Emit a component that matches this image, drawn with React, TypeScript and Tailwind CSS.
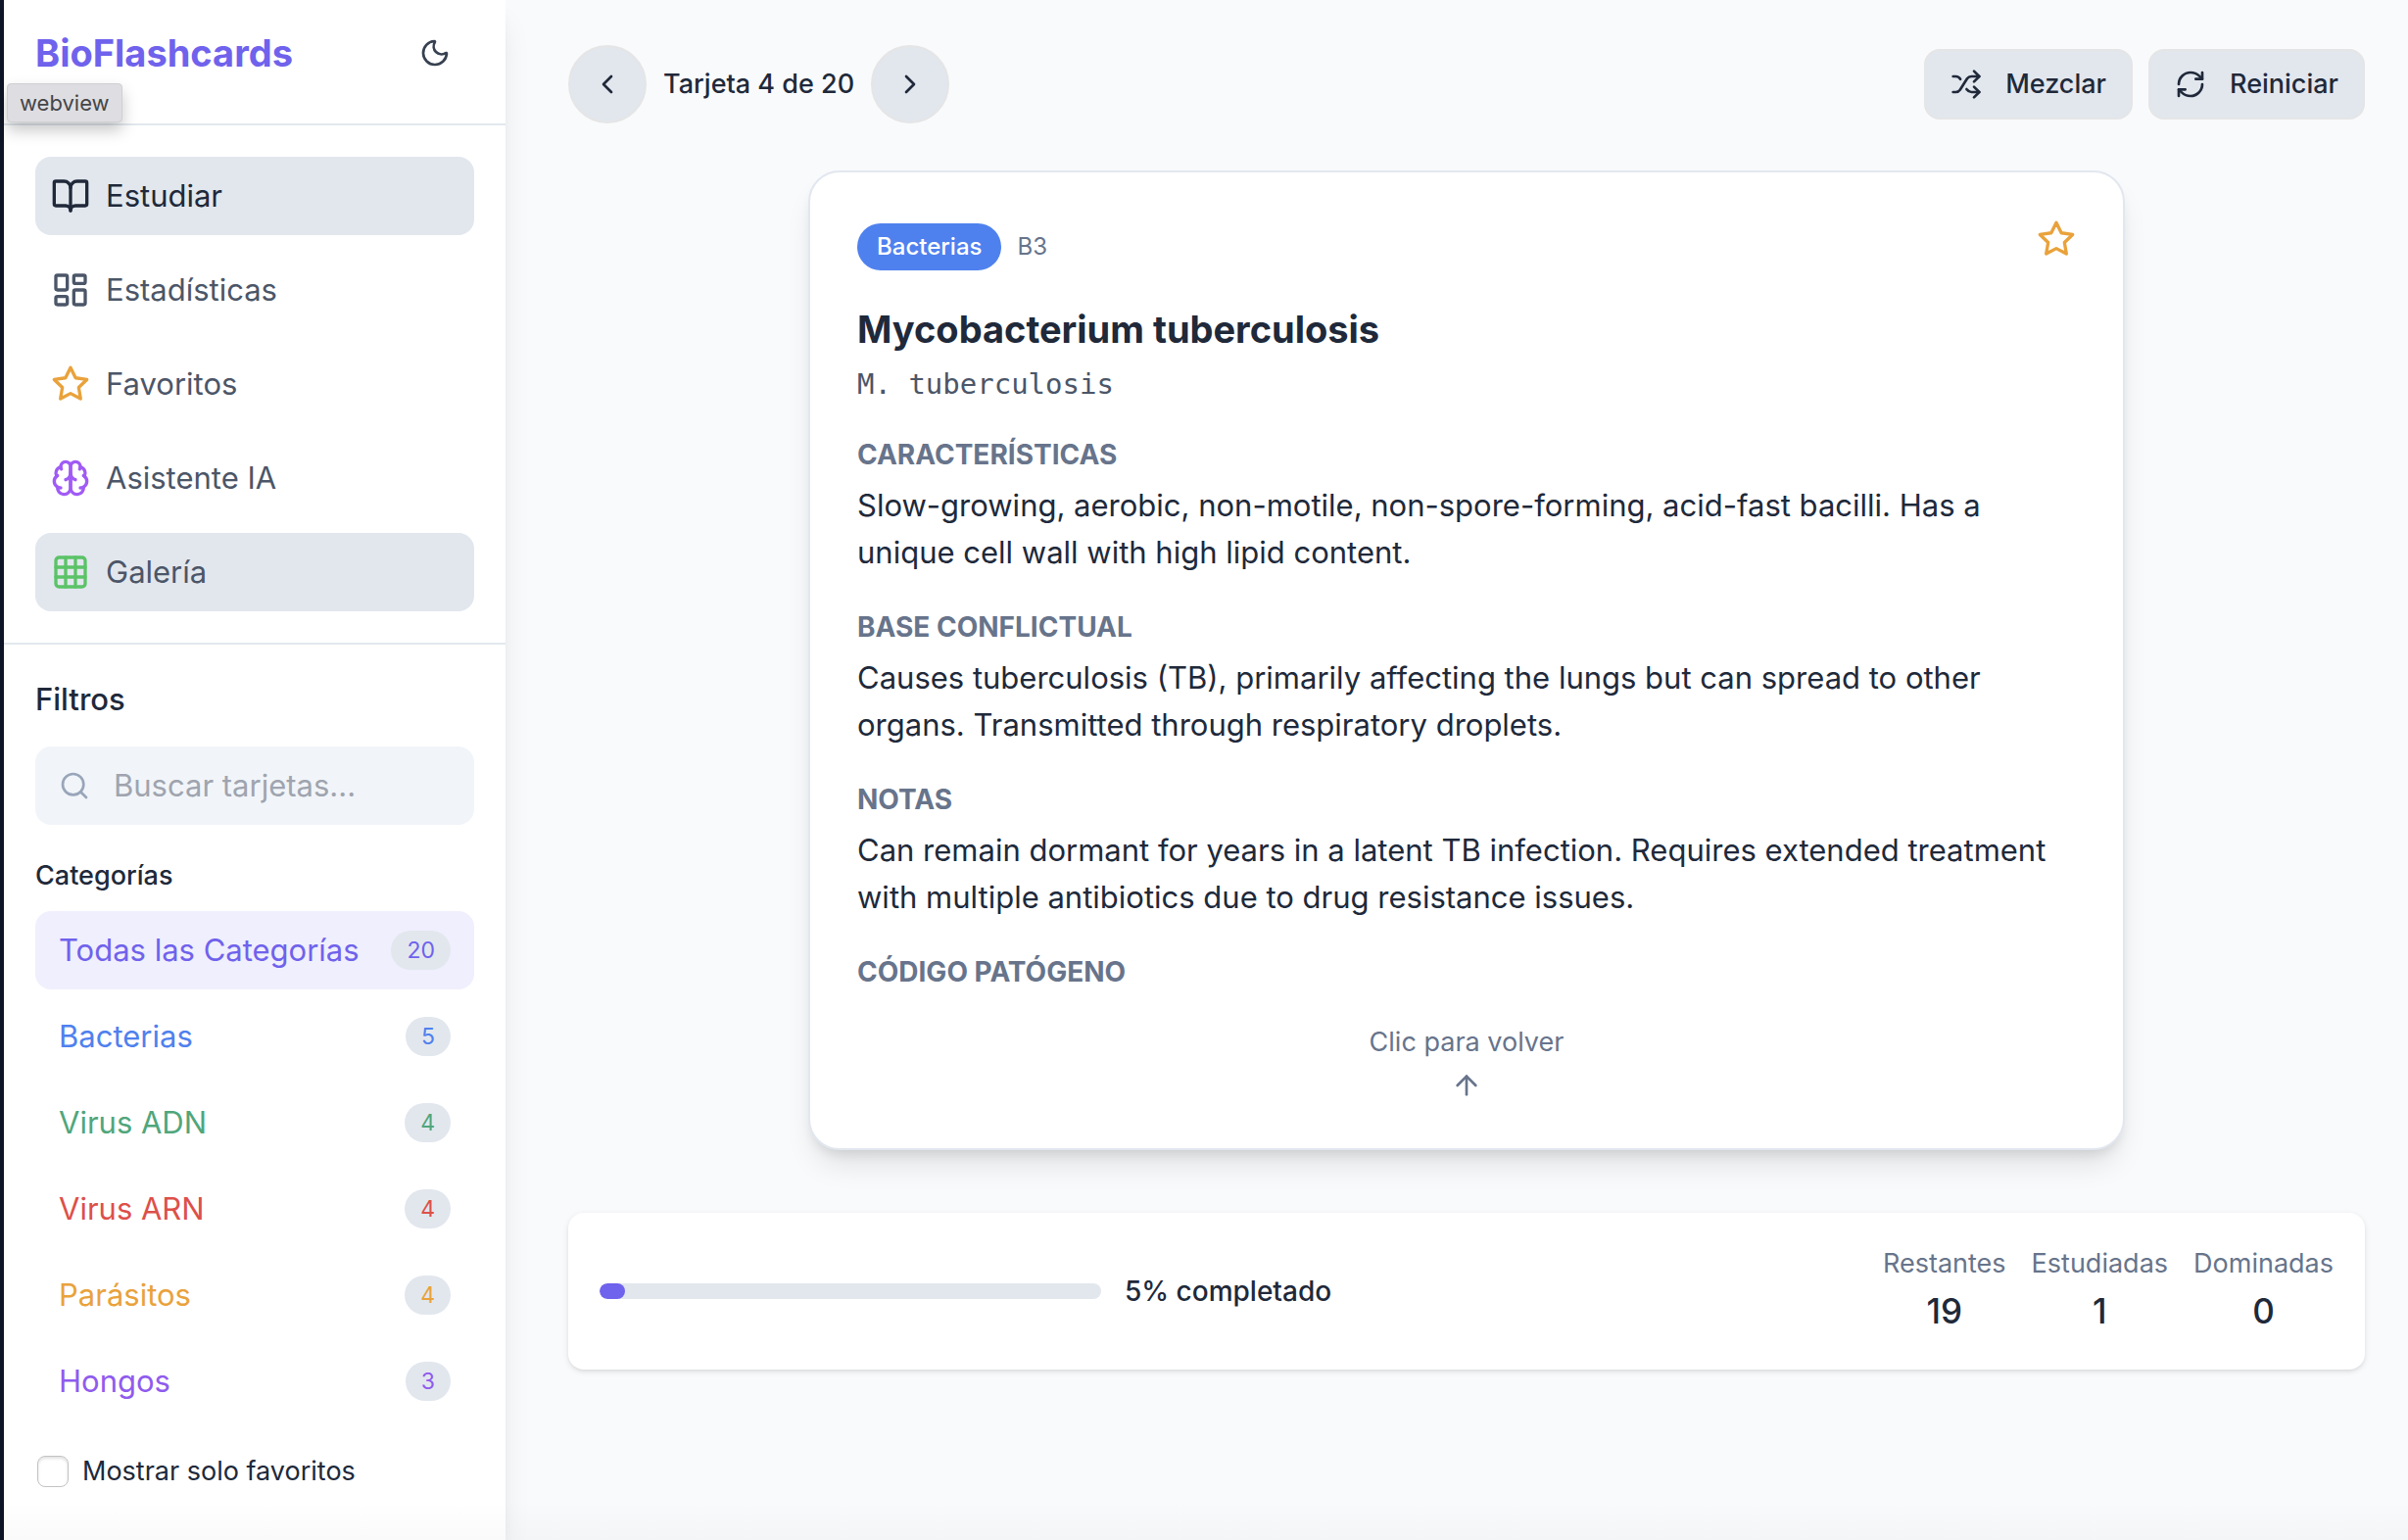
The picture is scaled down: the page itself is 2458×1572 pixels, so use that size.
import { useState, type ReactNode } from 'react';
import {
  ArrowUp,
  BookOpen,
  ChevronLeft,
  ChevronRight,
  Grid3x3,
  LayoutDashboard,
  Moon,
  RefreshCw,
  Search,
  Shuffle,
} from 'lucide-react';

function StarIcon() {
  return (
    <svg
      viewBox="0 0 24 24"
      fill="none"
      stroke="currentColor"
      strokeWidth="2"
      strokeLinecap="round"
      strokeLinejoin="round"
      className="size-10 text-[#e9a23b]"
      aria-hidden="true"
    >
      <polygon points="12 2 15.09 8.26 22 9.27 17 14.14 18.18 21.02 12 17.77 5.82 21.02 7 14.14 2 9.27 8.91 8.26 12 2" />
    </svg>
  );
}

function BrainIcon() {
  return (
    <svg
      viewBox="0 0 24 24"
      fill="none"
      stroke="currentColor"
      strokeWidth="2"
      strokeLinecap="round"
      strokeLinejoin="round"
      className="size-10 text-[#a05bf5]"
      aria-hidden="true"
    >
      <path d="M12 5a3 3 0 1 0-5.997.125 4 4 0 0 0-2.526 5.77 4 4 0 0 0 .556 6.588A4 4 0 1 0 12 18Z" />
      <path d="M12 5a3 3 0 1 1 5.997.125 4 4 0 0 1 2.526 5.77 4 4 0 0 1-.556 6.588A4 4 0 1 1 12 18Z" />
      <path d="M15 13a4.5 4.5 0 0 1-3-4 4.5 4.5 0 0 1-3 4" />
      <path d="M17.599 6.5a3 3 0 0 0 .399-1.375" />
      <path d="M6.003 5.125A3 3 0 0 0 6.401 6.5" />
      <path d="M3.477 10.896a4 4 0 0 1 .585-.396" />
      <path d="M19.938 10.5a4 4 0 0 1 .585.396" />
      <path d="M6 18a4 4 0 0 1-1.967-.516" />
      <path d="M19.967 17.484A4 4 0 0 1 18 18" />
    </svg>
  );
}

function NavItem({ icon, label, className }: { icon: ReactNode; label: string; className: string }) {
  return (
    <button
      type="button"
      className={`flex h-20 w-full items-center gap-4 rounded-2xl px-4 text-[31px] leading-[48px] ${className}`}
    >
      {icon}
      {label}
    </button>
  );
}

const categories = [
  { name: 'Todas las Categorías', count: 20, style: 'bg-[#f0effd] text-[#6f62ec]' },
  { name: 'Bacterias', count: 5, style: 'text-[#4f81ee]' },
  { name: 'Virus ADN', count: 4, style: 'text-[#50a67b]' },
  { name: 'Virus ARN', count: 4, style: 'text-[#dd5049]' },
  { name: 'Parásitos', count: 4, style: 'text-[#e9a23b]' },
  { name: 'Hongos', count: 3, style: 'text-[#8f5bee]' },
];

function Sidebar() {
  const [query, setQuery] = useState('');
  const [onlyFavorites, setOnlyFavorites] = useState(false);

  return (
    <aside className="relative z-10 w-[512px] shrink-0 bg-white shadow-[0_20px_30px_-6px_rgba(0,0,0,0.1),0_8px_12px_-4px_rgba(0,0,0,0.05)]">
      <header className="relative flex items-center justify-between border-b-2 border-[#e2e8ee] px-8 pt-3.5 pb-8">
        <h1 className="text-[38px] leading-[56px] font-bold text-[#6f62ec]">BioFlashcards</h1>
        <button
          type="button"
          aria-label="Cambiar tema"
          className="flex size-20 items-center justify-center rounded-full text-[#374151]"
        >
          <Moon className="size-8" />
        </button>
        <div
          role="tooltip"
          className="absolute top-[85px] left-[3px] flex h-10 items-center rounded-sm border border-[#cfcfd3] bg-[#dedee2] px-3 text-[22px] text-[#454547] shadow-[0_8px_16px_rgba(0,0,0,0.22)]"
        >
          webview
        </div>
      </header>

      <nav className="flex flex-col gap-4 border-b-2 border-[#e2e8ee] p-8">
        <NavItem
          label="Estudiar"
          className="bg-[#e2e7ee] text-[#20293a]"
          icon={<BookOpen className="size-10" />}
        />
        <NavItem
          label="Estadísticas"
          className="text-[#4b5668]"
          icon={<LayoutDashboard className="size-10" />}
        />
        <NavItem label="Favoritos" className="text-[#4b5668]" icon={<StarIcon />} />
        <NavItem label="Asistente IA" className="text-[#4b5668]" icon={<BrainIcon />} />
        <NavItem
          label="Galería"
          className="bg-[#e2e7ee] text-[#4b5668]"
          icon={<Grid3x3 className="size-10 text-[#5bc367]" />}
        />
      </nav>

      <section className="p-8">
        <h2 className="text-[31px] leading-[48px] font-medium text-[#20293a]">Filtros</h2>
        <label className="mt-6 flex h-20 items-center gap-6 rounded-2xl bg-[#f1f5f9] px-6">
          <Search className="size-8 shrink-0 text-[#98a5ba]" />
          <input
            type="text"
            aria-label="Buscar tarjetas"
            placeholder="Buscar tarjetas..."
            value={query}
            onChange={(e) => setQuery(e.target.value)}
            className="w-full min-w-0 bg-transparent text-[31px] leading-[48px] text-[#20293a] outline-none placeholder:text-[#9fa4af]"
          />
        </label>

        <h3 className="mt-8 text-[27px] leading-10 font-medium text-[#20293a]">Categorías</h3>
        <ul className="mt-4 flex flex-col gap-2">
          {categories.map((c) => (
            <li key={c.name}>
              <button
                type="button"
                className={`flex h-20 w-full items-center justify-between rounded-2xl px-6 text-[31px] leading-[48px] whitespace-nowrap ${c.style}`}
              >
                {c.name}
                <span className="rounded-full bg-[#e2e7ee] px-4 text-[23px] leading-10">{c.count}</span>
              </button>
            </li>
          ))}
        </ul>

        <label className="mt-8 flex h-10 items-center gap-3.5 text-[27px] leading-10 text-[#20293a]">
          <input
            type="checkbox"
            checked={onlyFavorites}
            onChange={(e) => setOnlyFavorites(e.target.checked)}
            className="ml-0.5 size-8 appearance-none rounded-lg border border-[#c3c3c5] bg-white shadow-[inset_0_2px_3px_rgba(0,0,0,0.12)] checked:bg-[#6f62ec]"
          />
          Mostrar solo favoritos
        </label>
      </section>
    </aside>
  );
}

function RoundButton({ label, children }: { label: string; children: ReactNode }) {
  return (
    <button
      type="button"
      aria-label={label}
      className="flex size-20 items-center justify-center rounded-full border-2 border-[#e5e5e6] bg-[#e2e7ee]"
    >
      {children}
    </button>
  );
}

function ActionButton({ icon, label }: { icon: ReactNode; label: string }) {
  return (
    <button
      type="button"
      className="flex h-18 items-center gap-6 rounded-2xl border-2 border-[#e5e5e6] bg-[#e2e7ee] px-[25px] text-[27px] leading-10 font-medium"
    >
      {icon}
      {label}
    </button>
  );
}

function Section({ title, children }: { title: string; children?: ReactNode }) {
  return (
    <section>
      <h3 className="text-[28px] leading-10 font-bold text-[#67748b] uppercase">{title}</h3>
      {children && <p className="mt-2 text-[31px] leading-[48px]">{children}</p>}
    </section>
  );
}

function Flashcard() {
  return (
    <article className="mx-auto mt-12 w-full max-w-[1344px] rounded-4xl border-2 border-[#e2e7ef] bg-white p-12 shadow-[0_20px_30px_-6px_rgba(0,0,0,0.1),0_8px_12px_-4px_rgba(0,0,0,0.1)]">
      <div className="flex items-start justify-between">
        <div className="flex h-14 items-center gap-4 text-[24px]">
          <span className="rounded-full bg-[#4f81ee] px-5 leading-[48px] font-medium text-white">Bacterias</span>
          <span className="text-[#67748b]">B3</span>
        </div>
        <button type="button" aria-label="Añadir a favoritos">
          <StarIcon />
        </button>
      </div>
      <h2 className="mt-8 text-[38px] leading-[48px] font-bold">Mycobacterium tuberculosis</h2>
      <p className="mt-3 font-['DejaVu_Sans_Mono',monospace] text-[29px] leading-10 text-[#4b5668]">M. tuberculosis</p>

      <div className="mt-8 flex flex-col gap-8">
        <Section title="Características">
          Slow-growing, aerobic, non-motile, non-spore-forming, acid-fast bacilli. Has a unique cell wall with high
          lipid content.
        </Section>
        <Section title="Base conflictual">
          Causes tuberculosis (TB), primarily affecting the lungs but can spread to other organs. Transmitted through
          respiratory droplets.
        </Section>
        <Section title="Notas">
          Can remain dormant for years in a latent TB infection. Requires extended treatment with multiple antibiotics
          due to drug resistance issues.
        </Section>
        <Section title="Código patógeno" />
      </div>

      <button
        type="button"
        className="mx-auto mt-8 flex flex-col items-center gap-2 text-[27px] leading-10 text-[#67748b]"
      >
        Clic para volver
        <ArrowUp className="size-8" />
      </button>
    </article>
  );
}

const stats = [
  { label: 'Restantes', value: 19 },
  { label: 'Estudiadas', value: 1 },
  { label: 'Dominadas', value: 0 },
];

function ProgressPanel({ percent }: { percent: number }) {
  return (
    <section className="mt-16 flex items-center justify-between rounded-2xl bg-white p-8 shadow-[0_2px_6px_rgba(0,0,0,0.1),0_2px_4px_-2px_rgba(0,0,0,0.1)]">
      <div className="flex items-center gap-6">
        <div
          role="progressbar"
          aria-label="Progreso"
          aria-valuenow={percent}
          aria-valuemin={0}
          aria-valuemax={100}
          className="h-4 w-[512px] overflow-hidden rounded-full bg-[#e2e7ee]"
        >
          <div className="h-full rounded-full bg-[#6f62ec]" style={{ width: `${percent}%` }} />
        </div>
        <span className="text-[28px] leading-10 font-medium">{percent}% completado</span>
      </div>
      <dl className="flex gap-[26px] text-center">
        {stats.map((s) => (
          <div key={s.label}>
            <dt className="text-[27px] leading-10 text-[#67748b]">{s.label}</dt>
            <dd className="text-[35px] leading-[56px] font-medium">{s.value}</dd>
          </div>
        ))}
      </dl>
    </section>
  );
}

export default function App() {
  return (
    <div className="relative flex min-h-screen border-l-4 border-[#0f1628] bg-[#f9fafc] font-[Inter,sans-serif] text-[#20293a]">
      <Sidebar />
      <main className="min-w-0 flex-1 pt-[46px] pr-11 pb-16 pl-16">
        <div className="flex items-center justify-between">
          <div className="flex items-center gap-[17px]">
            <RoundButton label="Tarjeta anterior">
              <ChevronLeft className="size-8" />
            </RoundButton>
            <span className="text-[27px] leading-10 font-medium">Tarjeta 4 de 20</span>
            <RoundButton label="Tarjeta siguiente">
              <ChevronRight className="size-8" />
            </RoundButton>
          </div>
          <div className="flex gap-4">
            <ActionButton label="Mezclar" icon={<Shuffle className="size-8" />} />
            <ActionButton label="Reiniciar" icon={<RefreshCw className="size-8" />} />
          </div>
        </div>
        <Flashcard />
        <ProgressPanel percent={5} />
      </main>
      <div className="pointer-events-none absolute inset-x-0 bottom-0 z-20 h-10 bg-gradient-to-b from-transparent to-black/[0.02]" />
    </div>
  );
}
